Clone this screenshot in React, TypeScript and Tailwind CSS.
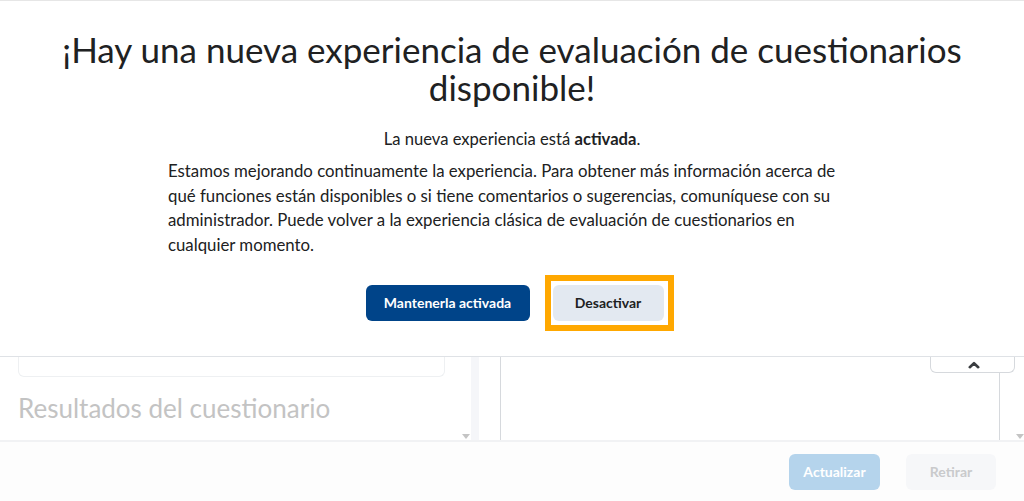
import React from 'react';

function CaretUp() {
  return (
    <svg width="12" height="8" viewBox="0 0 12 8" className="text-[#3a3d40]">
      <path d="M1.8 6.2 L6 2.2 L10.2 6.2" fill="none" stroke="currentColor" strokeWidth="2.6" strokeLinecap="round" strokeLinejoin="round" />
    </svg>
  );
}

export default function App() {
  return (
    <div className="flex h-[501px] w-[1024px] flex-col overflow-hidden bg-white font-['Lato',sans-serif] text-[#202122]">
      {/* Dialog */}
      <div className="flex h-[357px] shrink-0 flex-col items-center border-t border-b border-t-[#e6e6e6] border-b-[#dfe2e6] bg-white">
        <h1 className="mt-[29px] w-[920px] text-center text-[35px] leading-[38px] font-normal text-[#202122]">
          ¡Hay una nueva experiencia de evaluación de cuestionarios disponible!
        </h1>
        <p className="mt-[21px] text-center text-[16.6px] leading-[25px] text-[#202122]">
          La nueva experiencia está <span className="font-bold">activada</span>.
        </p>
        <p className="mt-[7px] w-[688px] text-[16.8px] leading-[24.7px] text-[#202122]">
          Estamos mejorando continuamente la experiencia. Para obtener más información acerca de qué funciones están disponibles o si tiene comentarios o sugerencias, comuníquese con su administrador. Puede volver a la experiencia clásica de evaluación de cuestionarios en cualquier momento.
        </p>
        <div className="mt-[27px] flex gap-[23px] pl-[5px]">
          <button className="h-[36px] w-[164px] rounded-[6px] bg-[#004489] text-[14px] font-bold text-white">
            Mantenerla activada
          </button>
          <button className="relative h-[36px] w-[111px] rounded-[6px] bg-[#e3e9f1] text-[14px] font-bold text-[#202122]">
            Desactivar
            <span className="pointer-events-none absolute -top-[10px] -bottom-[10px] -left-[8px] -right-[10px] border-[6px] border-[#ffa800]" />
          </button>
        </div>
      </div>

      {/* Page behind */}
      <div className="flex h-[83px] shrink-0">
        <div className="relative flex w-[471px] flex-col">
          <div className="ml-[18px] mr-[26px] h-[20px] rounded-b-[6px] border border-t-0 border-[#eef0f2]" />
          <div className="mt-[14px] pl-[18px] text-[26px] leading-[34px] text-[#c3c3c3]">Resultados del cuestionario</div>
          <span className="absolute right-[1px] bottom-[1px] h-0 w-0 border-x-[4px] border-t-[5px] border-x-transparent border-t-[#c4c4c4]" />
        </div>
        <div className="w-[8px] bg-[#f5f6f9]" />
        <div className="w-[21px]" />
        <div className="relative flex-1 border-l border-[#d6d9dd]">
          <div className="absolute top-0 right-[9px] flex h-[16px] w-[85px] items-center justify-center rounded-b-[6px] border border-t-0 border-[#d6d9dd] bg-white pl-[2px]">
            <CaretUp />
          </div>
          <div className="absolute top-[16px] bottom-0 right-[24px] border-l border-[#d6d9dd]" />
          <span className="absolute right-[0px] bottom-[1px] h-0 w-0 border-x-[4px] border-t-[5px] border-x-transparent border-t-[#c4c4c4]" />
        </div>
      </div>

      {/* Footer */}
      <div className="flex flex-1 items-center justify-end gap-[26px] border-t-2 border-[#f1f2f4] bg-[#fdfdfd] pr-[28px]">
        <button className="h-[36px] w-[91px] rounded-[6px] bg-[#b5d4ec] text-[14px] font-bold text-white">Actualizar</button>
        <button className="h-[36px] w-[90px] rounded-[6px] bg-[#f6f7f9] text-[14px] font-bold text-[#c9cacc]">Retirar</button>
      </div>
    </div>
  );
}
